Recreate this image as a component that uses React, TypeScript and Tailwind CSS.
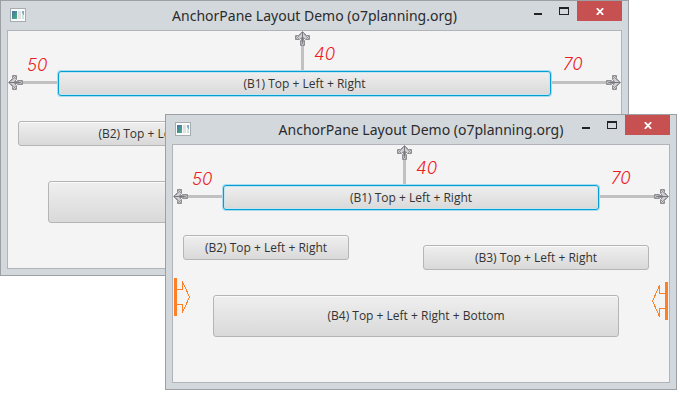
import type { ReactNode } from "react";

type Direction = "left" | "right" | "up";

const rotation: Record<Direction, string> = {
  left: "",
  right: "rotate-180",
  up: "rotate-90",
};

function ArrowHead({ direction }: { direction: Direction }) {
  return (
    <svg
      width="15"
      height="15"
      viewBox="0 0 15 15"
      aria-hidden="true"
      className={`block shrink-0 ${rotation[direction]}`}
    >
      <path
        d="M0.5 7.5 L4.5 3.5 V0.5 H8.5 V4.5 L6.5 6.5 H9.5 V5.5 H14.5 V9.5 H9.5 V8.5 H6.5 L8.5 10.5 V14.5 H4.5 V11.5 Z"
        fill="#d0d0d4"
        stroke="#8e8e93"
        strokeWidth="1"
      />
      <path d="M1 7.5 H13" stroke="#77777d" strokeWidth="1" />
      <path
        d="M5 1 L8 4 M8 1 L2.5 6.5 M5 14 L8 11 M8 14 L2.5 8.5 M10 6 L14 9 M14 6 L10 9"
        stroke="#8a8a90"
        strokeWidth="0.8"
        fill="none"
      />
    </svg>
  );
}

function Distance({ children }: { children: ReactNode }) {
  return (
    <span className="block font-['Inter',sans-serif] text-[17px] leading-4 font-light text-[#ed1c24] italic">
      {children}
    </span>
  );
}

function PushButton({
  children,
  className,
  focused = false,
}: {
  children?: ReactNode;
  className: string;
  focused?: boolean;
}) {
  const ring = focused
    ? "border-[#039ed3] shadow-[0_0_0_1px_#a8dcee,inset_0_0_0_1px_#c5e6f1]"
    : "border-[#b5b5b5] shadow-[inset_0_1px_0_#fafafa]";
  return (
    <button
      type="button"
      className={`overflow-hidden rounded-[3px] border bg-linear-to-b from-[#efefef] to-[#d9d9d9] text-xs whitespace-nowrap text-[#333] ${ring} ${className}`}
    >
      {children}
    </button>
  );
}

function ShrinkMarker({ className }: { className: string }) {
  return (
    <svg
      width="16"
      height="38"
      viewBox="0 0 16 38"
      aria-hidden="true"
      className={`absolute ${className}`}
    >
      <rect width="3" height="38" fill="#ff7f27" />
      <path
        d="M3 11.5 H8.5 V3.5 L15.5 19 L8.5 34.5 V26.5 H3"
        fill="none"
        stroke="#ff7f27"
        strokeWidth="1"
        shapeRendering="crispEdges"
      />
    </svg>
  );
}

function AppIcon() {
  return (
    <svg width="16" height="14" viewBox="0 0 16 14" aria-hidden="true">
      <defs>
        <linearGradient id="app-icon-fill" x1="0" y1="0" x2="1" y2="1">
          <stop offset="0" stopColor="#3f74a8" />
          <stop offset="1" stopColor="#4fb07c" />
        </linearGradient>
      </defs>
      <rect x="0.5" y="0.5" width="15" height="13" fill="#fafafa" stroke="#a7acb0" />
      <rect x="2" y="3" width="5" height="8" fill="url(#app-icon-fill)" />
      <rect x="8" y="3" width="3" height="8" fill="#dfe1e3" />
      <path d="M12 3 H14 V8 L12 5 Z" fill="#7fa9c4" />
      <path d="M12 6 L14 9 V11 H12 Z" fill="#c9e6d5" />
    </svg>
  );
}

function TitleBar() {
  return (
    <header className="grid h-[29px] grid-cols-[1fr_auto_1fr] items-start px-1.5">
      <div className="pt-[7px] pl-[3px]">
        <AppIcon />
      </div>
      <h1 className="pt-[3px] font-['Noto_Sans',sans-serif] text-sm leading-6 whitespace-nowrap text-[#2b2b2b]">
        AnchorPane Layout Demo (o7planning.org)
      </h1>
      <div className="flex justify-end">
        <button type="button" aria-label="Minimize" className="flex h-5 w-[26px] justify-center pt-3">
          <span className="block h-0.5 w-2 bg-[#222]" />
        </button>
        <button type="button" aria-label="Maximize" className="flex h-5 w-[26px] justify-center pt-1.5">
          <span className="block h-2 w-2.5 border border-t-2 border-[#222]" />
        </button>
        <button type="button" aria-label="Close" className="flex h-5 w-[45px] justify-center bg-[#c75050] pt-[7px]">
          <svg width="8" height="7" viewBox="0 0 8 7" aria-hidden="true">
            <path d="M0.8 0.2 L7.2 6.8 M7.2 0.2 L0.8 6.8" stroke="#fff" strokeWidth="1.8" />
          </svg>
        </button>
      </div>
    </header>
  );
}

function DemoWindow({
  className,
  topArrowInset,
  covered = false,
  children,
}: {
  className: string;
  topArrowInset: string;
  /** The lower right part lies under another window, so its labels are left out. */
  covered?: boolean;
  children?: ReactNode;
}) {
  return (
    <section className={`absolute border border-[#9c9fa3] bg-[#d3d8dc] ${className}`}>
      <TitleBar />
      <div className="relative mx-1.5 mb-1.5 border border-[#b0b4b8] bg-[#f4f4f4]">
        <div className="grid h-10 grid-cols-[50px_1fr_70px]">
          <div className="pt-[26px] pl-[19px]">
            <Distance>50</Distance>
          </div>
          <div className={`flex gap-1 ${topArrowInset}`}>
            <div className="flex flex-col items-center">
              <ArrowHead direction="up" />
              <span className="w-[3px] flex-1 bg-[#c1c1c1]" />
            </div>
            <div className="pt-[15px]">
              <Distance>40</Distance>
            </div>
          </div>
          <div className="pt-[25px] pl-3">
            <Distance>70</Distance>
          </div>
        </div>

        <div className="grid h-[25px] grid-cols-[50px_1fr_70px]">
          <div className="flex h-[23px] items-center">
            <ArrowHead direction="left" />
            <span className="h-[3px] flex-1 bg-[#c1c1c1]" />
          </div>
          <PushButton focused className="h-[25px]">
            (B1) Top + Left + Right
          </PushButton>
          <div className="flex h-[23px] items-center pl-px">
            <span className="h-[3px] flex-1 bg-[#c1c1c1]" />
            <ArrowHead direction="right" />
          </div>
        </div>

        <div className="mt-[25px] mr-5 ml-2.5 flex items-start gap-[74px]">
          <PushButton className="h-[25px] flex-1">(B2) Top + Left + Right</PushButton>
          <PushButton className="mt-2.5 h-[25px] w-[226px]">
            {covered ? null : "(B3) Top + Left + Right"}
          </PushButton>
        </div>

        <div className="mt-[25px] mr-[50px] mb-[45px] ml-10 flex">
          <PushButton className="h-[42px] flex-1">
            {covered ? null : "(B4) Top + Left + Right + Bottom"}
          </PushButton>
        </div>
        {children}
      </div>
    </section>
  );
}

export default function App() {
  return (
    <main className="relative min-h-screen overflow-hidden bg-white font-['Open_Sans','Noto_Sans',sans-serif]">
      <DemoWindow covered className="top-0 right-[59px] left-0" topArrowInset="pl-[237px]" />
      <DemoWindow className="top-[114px] right-[11px] left-[165px]" topArrowInset="pl-[174px]">
        <ShrinkMarker className="top-[133px] left-px" />
        <ShrinkMarker className="top-[137px] right-px rotate-180" />
      </DemoWindow>
    </main>
  );
}
